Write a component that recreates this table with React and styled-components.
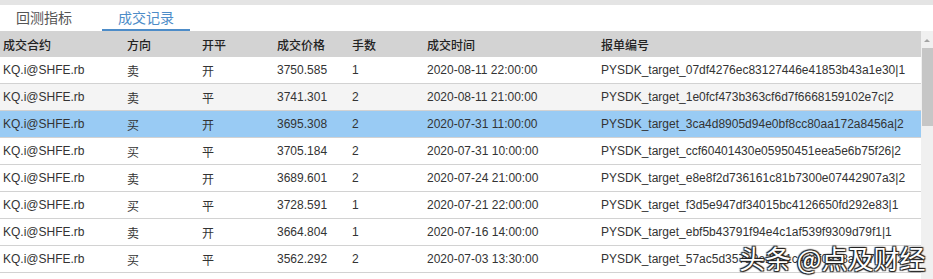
import React from "react";
import styled, { createGlobalStyle } from "styled-components";

const GlobalStyle = createGlobalStyle`
  html, body {
    margin: 0;
    padding: 0;
    background: #fff;
  }
  body {
    font-family: "Liberation Sans", "Noto Sans CJK SC", sans-serif;
    color: #333;
  }
`;

const Page = styled.div`
  position: relative;
  width: 933px;
  height: 279px;
  overflow: hidden;
  background: #fff;
`;

const TopStrip = styled.div`
  height: 5px;
  background: #e4e4e4;
`;

const TabBar = styled.div`
  display: flex;
  height: 26px;
`;

const Tab = styled.div`
  width: 88px;
  display: flex;
  justify-content: center;
  align-items: center;
  font-size: 14px;
  font-family: "Noto Sans CJK SC", sans-serif;
  color: ${(p) => (p.active ? "#4d8cc8" : "#555")};
  border-bottom: 2px solid ${(p) => (p.active ? "#4d8cc8" : "transparent")};
  box-sizing: border-box;
  margin-right: 14px;
  padding-bottom: 1px;
`;

const Body = styled.div`
  display: flex;
`;

const Table = styled.div`
  width: 921px;
`;

const Row = styled.div`
  display: grid;
  grid-template-columns: 124px 75px 75px 75px 75px 174px 1fr;
  height: ${(p) => (p.header ? "26px" : "27px")};
  align-items: center;
  box-sizing: border-box;
  border-bottom: ${(p) => (p.header ? "none" : "1px solid #d2d2d2")};
  background: ${(p) =>
    p.header ? "#d3d3d3" : p.selected ? "#99cbf4" : p.shade ? "#f4f4f4" : "#fff"};
  font-size: 12px;
  font-weight: ${(p) => (p.header ? 500 : 400)};
  color: ${(p) => (p.header ? "#222" : "#333")};
`;

const Cell = styled.div`
  padding-left: 3px;
  white-space: nowrap;
  overflow: hidden;
  font-family: ${(p) =>
    p.cjk ? '"Noto Sans CJK SC", sans-serif' : '"Liberation Sans", "Noto Sans CJK SC", sans-serif'};
`;

const Scrollbar = styled.div`
  width: 12px;
  height: 248px;
  background: #f0f0f0;
  display: flex;
  flex-direction: column;
  align-items: center;
`;

const Arrow = styled.div`
  margin-top: 8px;
  width: 0;
  height: 0;
  border-left: 3px solid transparent;
  border-right: 3px solid transparent;
  border-bottom: 3px solid #a3a3a3;
`;

const Thumb = styled.div`
  margin-top: 6px;
  width: 11px;
  height: 78px;
  background: #c6c6c6;
`;

const Watermark = styled.div`
  position: absolute;
  left: 739px;
  top: 241px;
  font-family: "Noto Sans CJK SC", sans-serif;
  font-size: 26px;
  line-height: 34px;
  color: #fff;
  text-shadow: 0 0 1px #222, 1px 1px 1px #222, -1px -1px 1px #222, 1px -1px 1px #222,
    -1px 1px 1px #222;
  white-space: nowrap;
`;

const headers = ["成交合约", "方向", "开平", "成交价格", "手数", "成交时间", "报单编号"];

const trades = [
  ["卖", "开", "3750.585", "1", "2020-08-11 22:00:00", "PYSDK_target_07df4276ec83127446e41853b43a1e30|1"],
  ["卖", "平", "3741.301", "2", "2020-08-11 21:00:00", "PYSDK_target_1e0fcf473b363cf6d7f6668159102e7c|2"],
  ["买", "开", "3695.308", "2", "2020-07-31 11:00:00", "PYSDK_target_3ca4d8905d94e0bf8cc80aa172a8456a|2"],
  ["买", "平", "3705.184", "2", "2020-07-31 10:00:00", "PYSDK_target_ccf60401430e05950451eea5e6b75f26|2"],
  ["卖", "开", "3689.601", "2", "2020-07-24 21:00:00", "PYSDK_target_e8e8f2d736161c81b7300e07442907a3|2"],
  ["买", "平", "3728.591", "1", "2020-07-21 22:00:00", "PYSDK_target_f3d5e947df34015bc4126650fd292e83|1"],
  ["卖", "开", "3664.804", "1", "2020-07-16 14:00:00", "PYSDK_target_ebf5b43791f94e4c1af539f9309d79f1|1"],
  ["买", "平", "3562.292", "2", "2020-07-03 13:30:00", "PYSDK_target_57ac5d357a9e2b81c4d6f0938a5b7e2c|2"],
];

const App = () => {
  return (
    <>
      <GlobalStyle />
      <Page>
        <TopStrip />
        <TabBar>
          <Tab>回测指标</Tab>
          <Tab active>成交记录</Tab>
        </TabBar>
        <Body>
          <Table>
            <Row header>
              {headers.map((h) => (
                <Cell key={h} cjk>
                  {h}
                </Cell>
              ))}
            </Row>
            {trades.map((t, i) => (
              <Row key={t[5]} shade={i === 1} selected={i === 2}>
                <Cell>KQ.i@SHFE.rb</Cell>
                <Cell cjk>{t[0]}</Cell>
                <Cell cjk>{t[1]}</Cell>
                <Cell>{t[2]}</Cell>
                <Cell>{t[3]}</Cell>
                <Cell>{t[4]}</Cell>
                <Cell>{t[5]}</Cell>
              </Row>
            ))}
          </Table>
          <Scrollbar>
            <Arrow />
            <Thumb />
          </Scrollbar>
        </Body>
        <Watermark>头条 @点及财经</Watermark>
      </Page>
    </>
  );
};

export default App;
